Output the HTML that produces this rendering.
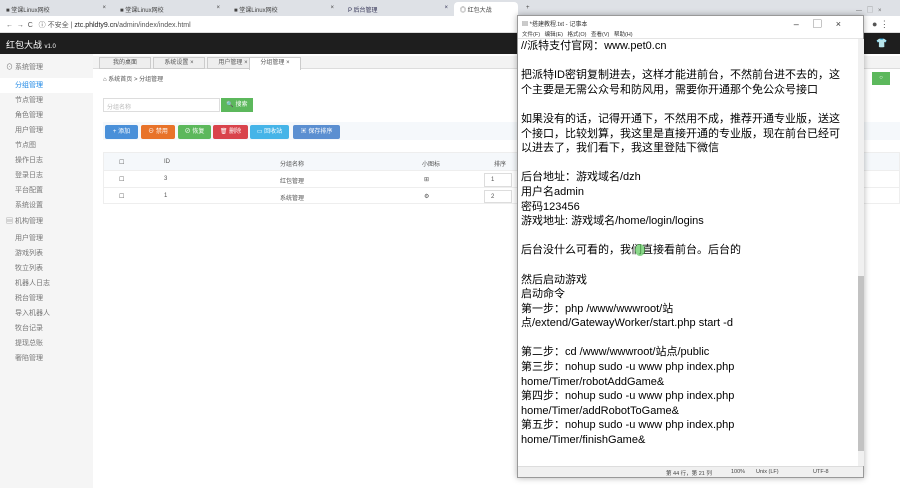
<!DOCTYPE html>
<html><head><meta charset="utf-8"><style>
*{margin:0;padding:0;box-sizing:border-box}
body{width:900px;height:488px;overflow:hidden;background:#fff;font-family:"Liberation Sans","Noto Sans CJK SC",sans-serif;position:relative;font-size:7px;color:#555}
.abs{position:absolute}
.tabbar{left:0;top:0;width:900px;height:16px;background:#dee1e6}
.tab{position:absolute;top:2px;height:14px;font-size:6px;color:#444;padding:3px 0 0 6px}
.addr{left:0;top:16px;width:900px;height:17px;background:#fff;border-bottom:1px solid #ddd}
.hdr{left:0;top:33px;width:900px;height:21px;background:#1e1e1e;color:#fff;font-size:9px;padding:5px 6px}
.side{left:0;top:54px;width:93px;height:434px;background:#f5f5f5}
.side div{height:15px;line-height:15px;padding-left:15px;font-size:7px;color:#777}
.main{left:93px;top:54px;width:807px;height:434px;background:#fff}
.btn{position:absolute;top:125px;height:14px;color:#fff;font-size:6px;line-height:14px;text-align:center;border-radius:2px}
.np{left:517px;top:15px;width:347px;height:463px;background:#fff;border:1px solid #999;box-shadow:0 0 6px rgba(0,0,0,.3)}
.txt{position:absolute;left:3px;top:23px;width:336px;font-size:11px;line-height:14.6px;color:#000;white-space:pre;font-family:"Liberation Sans","Noto Sans CJK SC",sans-serif}
</style></head><body>
<div class="abs tabbar">
<div class="tab" style="left:0;width:112px">■ 堂课Linux网校 <span style="float:right;margin-right:6px">×</span></div>
<div class="tab" style="left:114px;width:112px">■ 堂课Linux网校 <span style="float:right;margin-right:6px">×</span></div>
<div class="tab" style="left:228px;width:112px">■ 堂课Linux网校 <span style="float:right;margin-right:6px">×</span></div>
<div class="tab" style="left:342px;width:112px;color:#335">P 后台管理 <span style="float:right;margin-right:6px">×</span></div>
<div class="tab" style="left:454px;width:64px;background:#fff;border-radius:4px 4px 0 0">◎ 红包大战</div>
<div class="tab" style="left:520px">+</div>
<div class="tab" style="left:850px;color:#666">— &nbsp; ▢ &nbsp; ×</div>
</div>
<div class="abs addr"><div style="position:absolute;left:6px;top:4px;font-size:7px;color:#555">← &nbsp;→ &nbsp;C &nbsp; ⓘ 不安全 | <span style="color:#222">ztc.phldty9.cn</span>/admin/index/index.html</div>
<div style="position:absolute;left:872px;top:3px;font-size:9px;color:#555">● ⋮</div></div>
<div class="abs hdr">红包大战 <span style="font-size:6px">v1.0</span><span style="position:absolute;left:876px;top:5px">👕</span></div>
<div class="abs side">
<div style="padding-left:6px;margin-top:6px;height:18px">⊙ 系统管理</div>
<div style="background:#fff;color:#1e88e5">分组管理</div>
<div>节点管理</div><div>角色管理</div><div>用户管理</div><div>节点图</div><div>操作日志</div><div>登录日志</div><div>平台配置</div><div>系统设置</div>
<div style="padding-left:6px;height:18px;line-height:18px">▤ 机构管理</div>
<div>用户管理</div><div>游戏列表</div><div>牧立列表</div><div>机器人日志</div><div>税台管理</div><div>导入机器人</div><div>牧台记录</div><div>提现总账</div><div>奢陷管理</div>
</div>
<div class="abs" style="left:93px;top:250px;width:8px;height:25px;background:#e8e8e8;border-radius:0 4px 4px 0"></div>
<div class="abs main">
<div style="position:absolute;left:0;top:2px;width:807px;height:13px;border-bottom:1px solid #ddd;background:#f3f3f3"></div>
<div style="position:absolute;left:6px;top:3px;font-size:6px;width:52px;height:12px;border:1px solid #ccc;background:#eee;text-align:center;line-height:11px">我的桌面</div>
<div style="position:absolute;left:60px;top:3px;font-size:6px;width:52px;height:12px;border:1px solid #ccc;background:#eee;text-align:center;line-height:11px">系统设置 ×</div>
<div style="position:absolute;left:114px;top:3px;font-size:6px;width:52px;height:12px;border:1px solid #ccc;background:#eee;text-align:center;line-height:11px">用户管理 ×</div>
<div style="position:absolute;left:156px;top:3px;font-size:6px;width:52px;height:13px;border:1px solid #ccc;border-bottom:none;background:#fff;text-align:center;line-height:11px">分组管理 ×</div>
<div style="position:absolute;left:10px;top:20px;font-size:6px">⌂ 系统首页 &gt; 分组管理</div>
<div style="position:absolute;left:10px;top:44px;width:117px;height:14px;border:1px solid #ddd;font-size:6px;color:#bbb;padding:3px">分组名称</div>
<div style="position:absolute;left:128px;top:44px;width:32px;height:14px;background:#5cb85c;color:#fff;font-size:6px;line-height:14px;text-align:center">🔍 搜索</div>
<div style="position:absolute;left:10px;top:68px;width:797px;height:18px;background:#f5f8fb"></div>
<div style="position:absolute;left:10px;top:98px;width:797px;height:52px;border:1px solid #eee;font-size:6px">
<div style="height:18px;background:#f5f8fb;border-bottom:1px solid #eee"></div>
<div style="height:17px;border-bottom:1px solid #eee"></div>
<span style="position:absolute;left:60px;top:6px">ID</span><span style="position:absolute;left:176px;top:6px">分组名称</span><span style="position:absolute;left:318px;top:6px">小图标</span><span style="position:absolute;left:390px;top:6px">排序</span>
<span style="position:absolute;left:15px;top:6px">☐</span><span style="position:absolute;left:15px;top:23px">☐</span><span style="position:absolute;left:15px;top:40px">☐</span>
<span style="position:absolute;left:60px;top:23px">3</span><span style="position:absolute;left:176px;top:23px">红包管理</span><span style="position:absolute;left:320px;top:23px">⊞</span>
<span style="position:absolute;left:60px;top:40px">1</span><span style="position:absolute;left:176px;top:40px">系统管理</span><span style="position:absolute;left:320px;top:40px">⚙</span>
<span style="position:absolute;left:380px;top:20px;width:28px;height:14px;border:1px solid #ddd;padding:3px 0 0 6px">1</span>
<span style="position:absolute;left:380px;top:37px;width:28px;height:13px;border:1px solid #ddd;padding:3px 0 0 6px">2</span>
</div>
<div style="position:absolute;left:779px;top:18px;width:18px;height:13px;background:#5cb85c;color:#fff;font-size:6px;text-align:center;line-height:13px">○</div>
</div>
<div class="btn" style="left:105px;width:33px;background:#4a90d9">+ 添加</div>
<div class="btn" style="left:141px;width:34px;background:#e8732a">⊖ 禁用</div>
<div class="btn" style="left:178px;width:33px;background:#5cb85c">⊘ 恢复</div>
<div class="btn" style="left:213px;width:35px;background:#d9434c">🗑 删除</div>
<div class="btn" style="left:250px;width:39px;background:#45b4e8">▭ 回收站</div>
<div class="btn" style="left:293px;width:47px;background:#5b8fd1">▣ 保存排序</div>
<div class="abs np">
<div style="position:absolute;left:4px;top:3px;font-size:6px;color:#333">▤ *搭建教程.txt - 记事本</div>
<div style="position:absolute;right:8px;top:1px;font-size:9px;color:#333;letter-spacing:14px">–▢×</div>
<div style="position:absolute;left:4px;top:14px;font-size:5.5px;color:#333">文件(F) &nbsp; 编辑(E) &nbsp; 格式(O) &nbsp; 查看(V) &nbsp; 帮助(H)</div>
<div style="position:absolute;left:0;top:22px;width:345px;height:1px;background:#e5e5e5"></div>
<div class="txt">//派特支付官网：www.pet0.cn

把派特ID密钥复制进去，这样才能进前台，不然前台进不去的，这
个主要是无需公众号和防风用，需要你开通那个免公众号接口

如果没有的话，记得开通下，不然用不成，推荐开通专业版，送这
个接口，比较划算，我这里是直接开通的专业版，现在前台已经可
以进去了，我们看下，我这里登陆下微信

后台地址：游戏域名/dzh
用户名admin
密码123456
游戏地址: 游戏域名/home/login/logins

后台没什么可看的，我们直接看前台。后台的

然后启动游戏
启动命令
第一步：php /www/wwwroot/站
点/extend/GatewayWorker/start.php start -d

第二步：cd /www/wwwroot/站点/public
第三步：nohup sudo -u www php index.php
home/Timer/robotAddGame&amp;
第四步：nohup sudo -u www php index.php
home/Timer/addRobotToGame&amp;
第五步：nohup sudo -u www php index.php
home/Timer/finishGame&amp;</div>
<div style="position:absolute;left:340px;top:23px;width:6px;height:427px;background:#f0f0f0"></div>
<div style="position:absolute;left:340px;top:260px;width:6px;height:175px;background:#c2c2c2"></div>
<div style="position:absolute;left:0;top:450px;width:345px;height:11px;background:#f0f0f0;border-top:1px solid #ddd;font-size:5.5px;color:#444">
<span style="position:absolute;left:148px;top:2px">第 44 行，第 21 列</span><span style="position:absolute;left:213px;top:2px">100%</span><span style="position:absolute;left:238px;top:2px">Unix (LF)</span><span style="position:absolute;left:295px;top:2px">UTF-8</span></div>
</div>
<div class="abs" style="left:635px;top:244px;width:10px;height:12px;border-radius:50%;background:rgba(90,200,90,.7)"></div>
</body></html>
